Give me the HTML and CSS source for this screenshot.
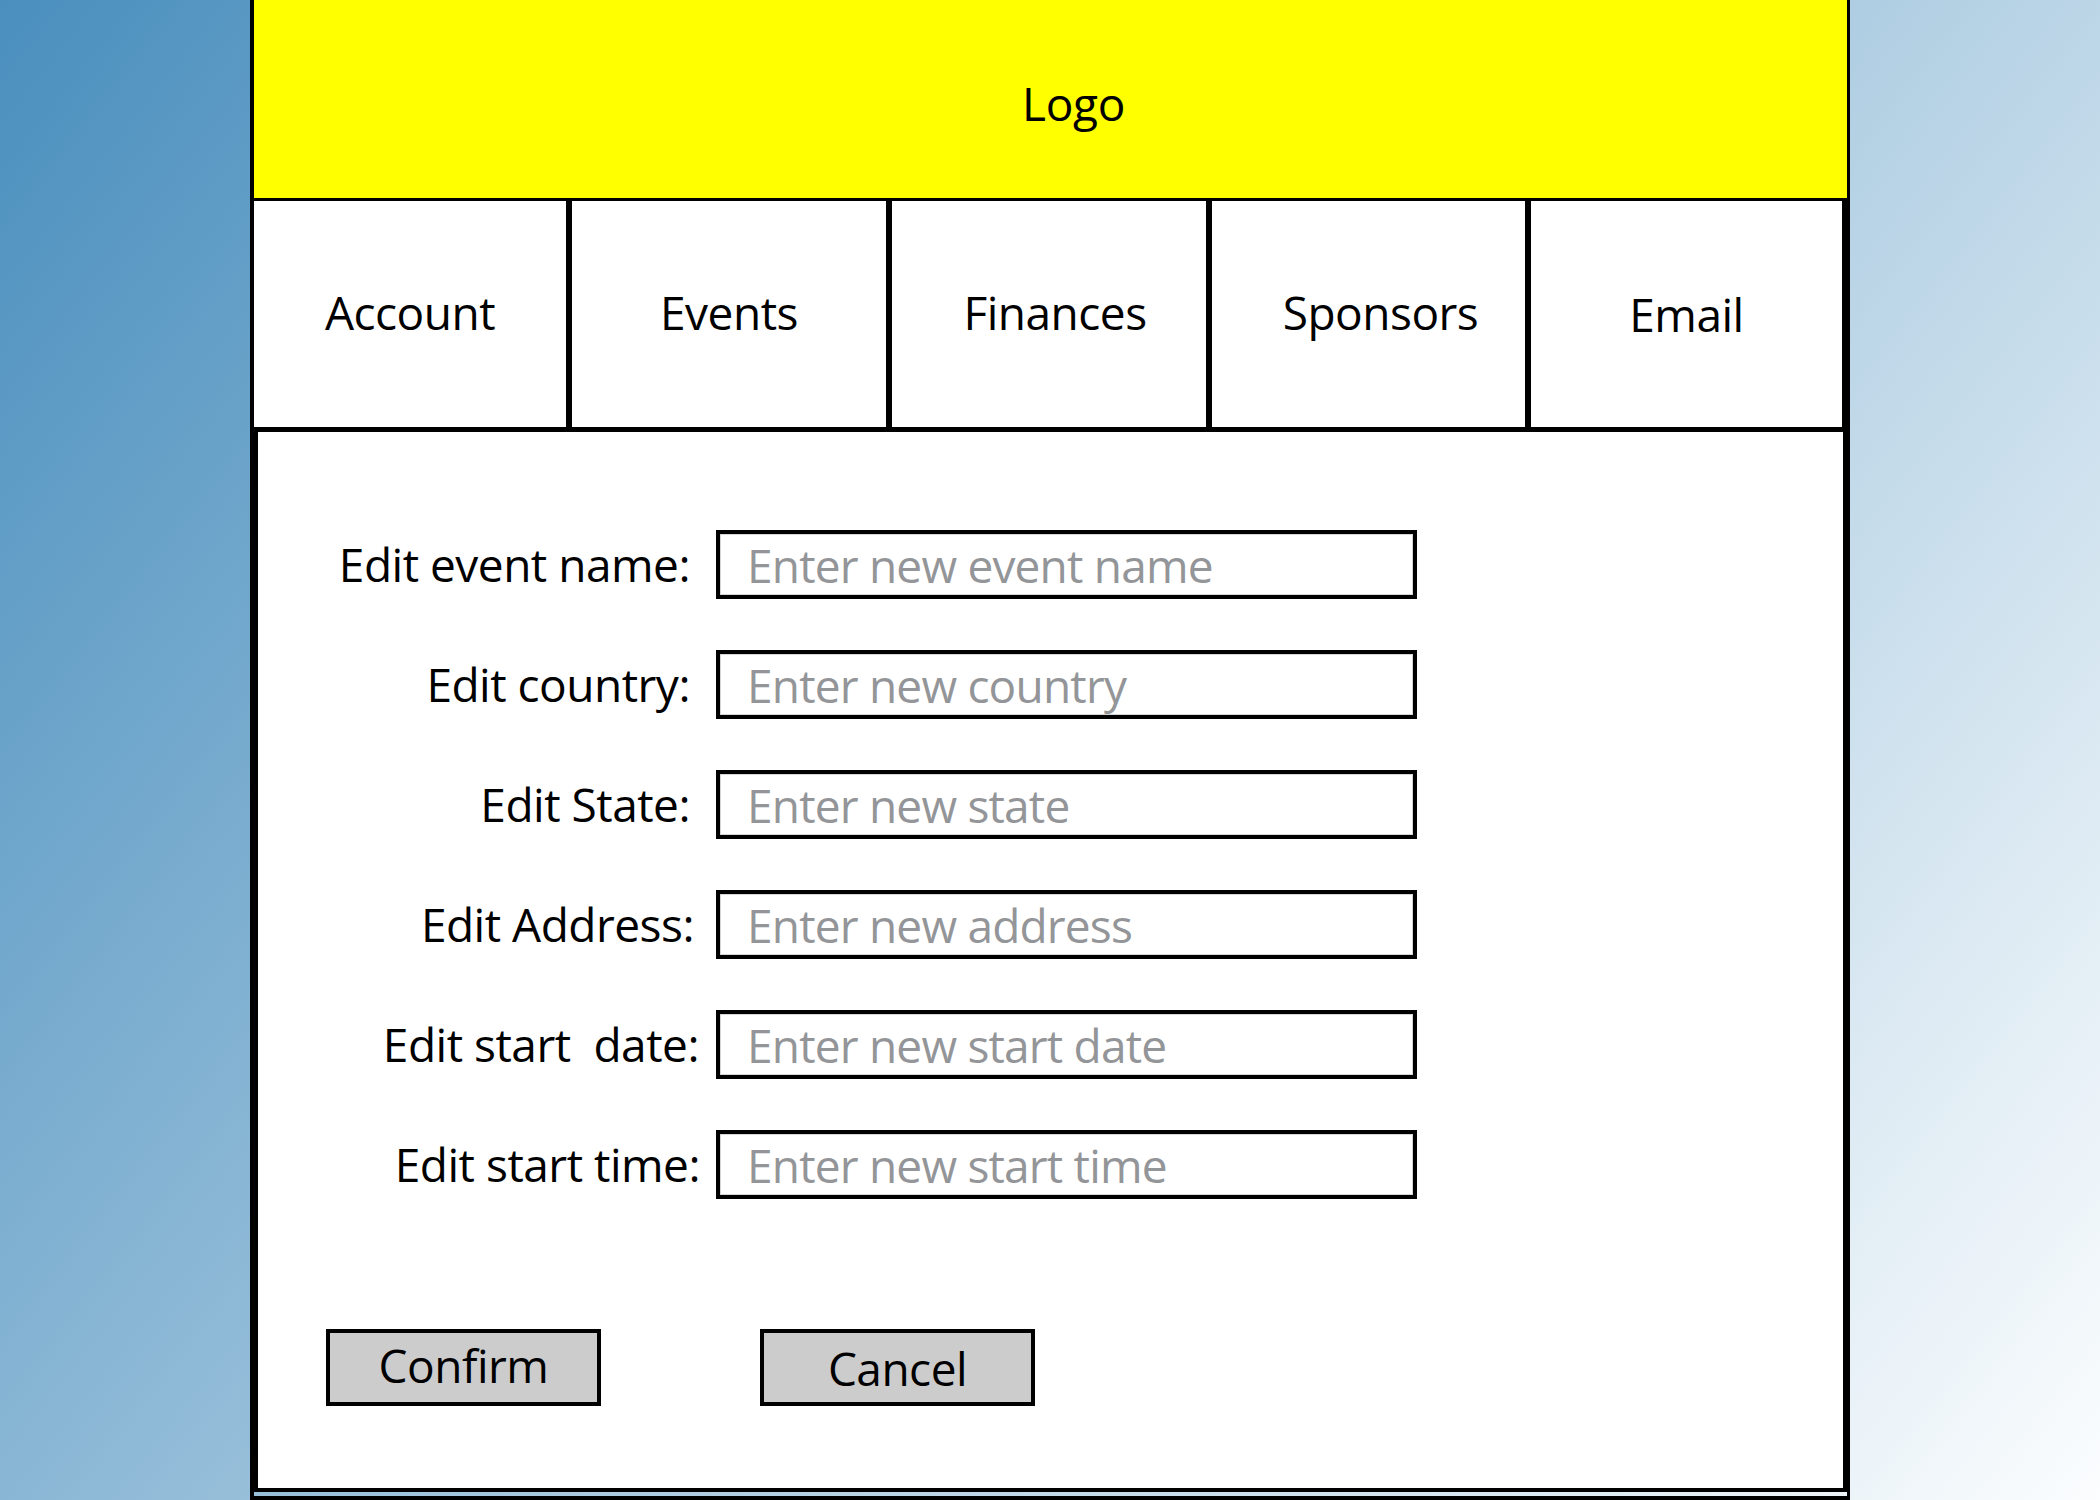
FILE: index.html
```html
<!DOCTYPE html>
<html lang="en">
<head>
<meta charset="utf-8">
<title>Edit Event</title>
<link rel="stylesheet" href="styles.css">
</head>
<body>
<div class="frame">
  <header class="brand"><span class="logo">Logo</span></header>
  <nav class="tabs">
    <a class="tab" href="#">Account</a>
    <a class="tab" href="#">Events</a>
    <a class="tab tab-finances" href="#">Finances</a>
    <a class="tab tab-sponsors" href="#">Sponsors</a>
    <a class="tab tab-email" href="#">Email</a>
  </nav>
  <main class="panel">
    <form class="edit-form">
      <div class="fields">
        <div class="field"><label class="label">Edit event name:</label><input class="input" type="text" placeholder="Enter new event name"></div>
        <div class="field"><label class="label">Edit country:</label><input class="input" type="text" placeholder="Enter new country"></div>
        <div class="field"><label class="label">Edit State:</label><input class="input" type="text" placeholder="Enter new state"></div>
        <div class="field"><label class="label label-n1">Edit Address:</label><input class="input" type="text" placeholder="Enter new address"></div>
        <div class="field"><label class="label label-n2">Edit start  date:</label><input class="input" type="text" placeholder="Enter new start date"></div>
        <div class="field"><label class="label label-n3">Edit start time:</label><input class="input" type="text" placeholder="Enter new start time"></div>
      </div>
      <div class="actions">
        <button class="btn btn-confirm" type="button">Confirm</button>
        <button class="btn btn-cancel" type="button">Cancel</button>
      </div>
    </form>
  </main>
  <div class="below"></div>
</div>
</body>
</html>
```

FILE: styles.css
```css
html, body {
  margin: 0;
  padding: 0;
}

body {
  width: 2100px;
  height: 1500px;
  overflow: hidden;
  background: linear-gradient(128deg, #4a8fbe 0%, #fbfdfe 100%);
  font-family: "Open Sans", "Noto Sans", sans-serif;
  color: #000;
}

.frame {
  box-sizing: border-box;
  width: 1600px;
  height: 1500px;
  margin-left: 250px;
  border-left: 4px solid #000;
  border-right: 3px solid #000;
  display: flex;
  flex-direction: column;
}

.brand {
  height: 198px;
  flex: none;
  background: #ffff00;
  border-bottom: 3px solid #000;
  display: flex;
  align-items: center;
  justify-content: center;
  padding-left: 46px;
}

.logo {
  font-size: 46px;
  line-height: 1;
  letter-spacing: -0.3px;
  padding-top: 7px;
}

.tabs {
  height: 226px;
  flex: none;
  display: grid;
  grid-template-columns: 318px 320px 320px 319px 1fr;
  border-bottom: 5px solid #000;
  background: #fff;
}

.tab {
  display: flex;
  align-items: center;
  justify-content: center;
  border-right: 6px solid #000;
  font-size: 46px;
  letter-spacing: -0.5px;
  color: #000;
  text-decoration: none;
  padding-bottom: 4px;
}

.tab:last-child {
  border-right-width: 5px;
}

.tab-finances {
  padding-left: 12px;
}

.tab-sponsors {
  padding-left: 24px;
}

.tab-email {
  padding-bottom: 0;
}

.panel {
  box-sizing: border-box;
  height: 1060px;
  flex: none;
  background: #fff;
  border-left: 4px solid #000;
  border-right: 4px solid #000;
  border-bottom: 4px solid #000;
}

.edit-form {
  margin: 0;
  padding-top: 98px;
  display: flex;
  flex-direction: column;
}

.fields {
  display: flex;
  flex-direction: column;
  gap: 51px;
}

.field {
  display: grid;
  grid-template-columns: 432px 701px;
  column-gap: 26px;
  align-items: center;
  height: 69px;
}

.label {
  text-align: right;
  font-size: 46px;
  letter-spacing: -0.5px;
  white-space: pre;
  line-height: 1.2;
}

.label-n1 { margin-right: -4px; }
.label-n2 { margin-right: -9px; }
.label-n3 { margin-right: -10px; }

.input {
  box-sizing: border-box;
  width: 701px;
  height: 69px;
  margin: 0;
  border: 4px solid #000;
  box-shadow: inset 0 0 0 1px #d4d4d4;
  background: #fff;
  padding: 0 0 0 27px;
  font-family: "Open Sans", "Noto Sans", sans-serif;
  font-size: 46px;
  letter-spacing: -0.8px;
  color: #000;
  outline: none;
}

.input::placeholder {
  color: #939598;
  opacity: 1;
}

.actions {
  display: flex;
  gap: 159px;
  padding-left: 68px;
  margin-top: 130px;
}

.btn {
  box-sizing: border-box;
  width: 275px;
  height: 77px;
  margin: 0;
  padding: 0;
  border: 4px solid #000;
  background: #cccccc;
  font-family: "Open Sans", "Noto Sans", sans-serif;
  font-size: 46px;
  letter-spacing: -0.5px;
  color: #000;
  line-height: 1;
}

.btn-confirm {
  padding-bottom: 6px;
}

.below {
  flex: 1;
  margin-top: 4px;
  border-top: 4px solid #000;
}
```
